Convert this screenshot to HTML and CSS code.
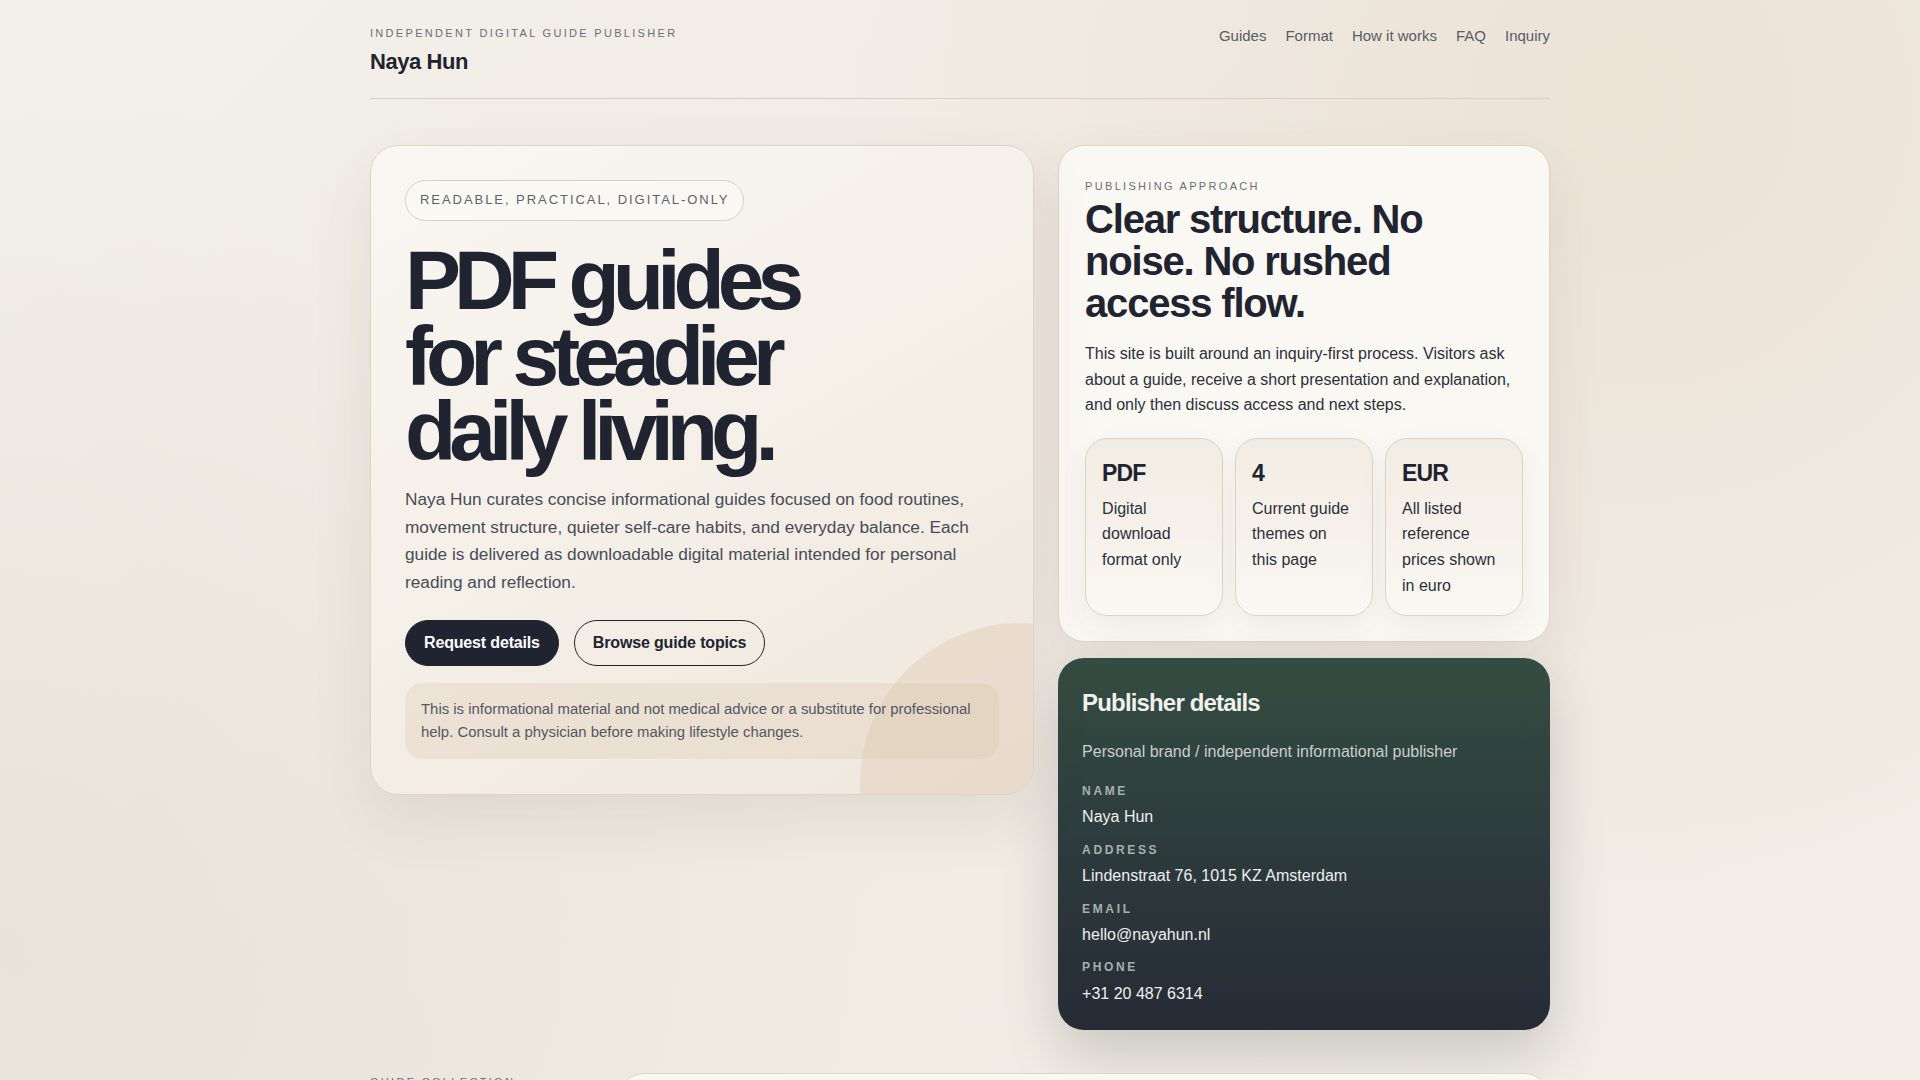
FILE: index.html
```html
<!DOCTYPE html>
<html lang="en">
<head>
<meta charset="utf-8">
<title>Naya Hun — PDF guides</title>
<link rel="stylesheet" href="styles.css">
</head>
<body>
<div class="page">
  <header class="site-header">
    <div class="brand">
      <p class="eyebrow">Independent digital guide publisher</p>
      <p class="brand-name">Naya Hun</p>
    </div>
    <nav class="nav">
      <a href="#guides">Guides</a>
      <a href="#format">Format</a>
      <a href="#how">How it works</a>
      <a href="#faq">FAQ</a>
      <a href="#inquiry">Inquiry</a>
    </nav>
  </header>

  <main class="hero">
    <section class="hero-card">
      <span class="hero-circle"></span>
      <div class="hero-body">
        <span class="pill">Readable, practical, digital-only</span>
        <h1 class="hero-title">PDF guides for steadier daily living.</h1>
        <p class="hero-text">Naya Hun curates concise informational guides focused on food routines, movement structure, quieter self-care habits, and everyday balance. Each guide is delivered as downloadable digital material intended for personal reading and reflection.</p>
        <div class="actions">
          <a class="btn btn-dark" href="#inquiry">Request details</a>
          <a class="btn btn-outline" href="#guides">Browse guide topics</a>
        </div>
        <p class="disclaimer">This is informational material and not medical advice or a substitute for professional help. Consult a physician before making lifestyle changes.</p>
      </div>
    </section>

    <div class="side">
      <section class="approach-card">
        <p class="eyebrow">Publishing approach</p>
        <h2 class="approach-title">Clear structure. No noise. No rushed access flow.</h2>
        <p class="approach-text">This site is built around an inquiry-first process. Visitors ask about a guide, receive a short presentation and explanation, and only then discuss access and next steps.</p>
        <div class="stats">
          <div class="stat">
            <p class="stat-value">PDF</p>
            <p class="stat-label">Digital download format only</p>
          </div>
          <div class="stat">
            <p class="stat-value">4</p>
            <p class="stat-label">Current guide themes on this page</p>
          </div>
          <div class="stat">
            <p class="stat-value">EUR</p>
            <p class="stat-label">All listed reference prices shown in euro</p>
          </div>
        </div>
      </section>

      <section class="publisher-card">
        <h2 class="publisher-title">Publisher details</h2>
        <p class="publisher-sub">Personal brand / independent informational publisher</p>
        <dl class="details">
          <div class="detail">
            <dt>Name</dt>
            <dd>Naya Hun</dd>
          </div>
          <div class="detail">
            <dt>Address</dt>
            <dd>Lindenstraat 76, 1015 KZ Amsterdam</dd>
          </div>
          <div class="detail">
            <dt>Email</dt>
            <dd>hello@nayahun.nl</dd>
          </div>
          <div class="detail">
            <dt>Phone</dt>
            <dd>+31 20 487 6314</dd>
          </div>
        </dl>
      </section>
    </div>
  </main>

  <section class="collection" id="guides">
    <div class="collection-intro">
      <p class="eyebrow">Guide collection</p>
      <h2 class="collection-title">Four calm, practical topics.</h2>
    </div>
    <div class="collection-card">
      <p class="collection-text">Each guide is a short, structured PDF intended for personal reading.</p>
    </div>
  </section>
</div>
</body>
</html>
```

FILE: styles.css
```css
* {
  box-sizing: border-box;
}

html, body {
  margin: 0;
  padding: 0;
}

body {
  font-family: "Liberation Sans", Arial, Helvetica, sans-serif;
  color: #1f2430;
  background:
    radial-gradient(circle at 85% 8%, rgba(232, 220, 204, 0.55), rgba(232, 220, 204, 0) 38%),
    radial-gradient(circle at 0% 70%, rgba(226, 220, 210, 0.6), rgba(226, 220, 210, 0) 40%),
    linear-gradient(135deg, #f3f0ea 0%, #f0ebe3 45%, #f2ede6 100%);
  min-height: 100vh;
}

p, h1, h2, dl, dd, dt {
  margin: 0;
}

a {
  text-decoration: none;
  color: inherit;
}

.page {
  width: 1180px;
  margin: 0 auto;
}

/* Header */
.site-header {
  display: flex;
  justify-content: space-between;
  align-items: flex-start;
  padding: 27px 0 22px;
  border-bottom: 1px solid #d9d0c3;
}

.eyebrow {
  font-size: 11px;
  line-height: 1.2;
  letter-spacing: 0.21em;
  text-transform: uppercase;
  color: #6a6e77;
}

.brand-name {
  margin-top: 9px;
  font-size: 22px;
  line-height: 1.2;
  font-weight: 700;
  letter-spacing: -0.02em;
  color: #1f2430;
}

.nav {
  display: flex;
  gap: 19px;
  font-size: 15px;
  line-height: 18px;
  color: #575c67;
}

/* Hero grid */
.hero {
  display: grid;
  grid-template-columns: 1.35fr 1fr;
  gap: 24px;
  align-items: start;
  margin-top: 46px;
}

.hero-card {
  position: relative;
  overflow: hidden;
  border: 1px solid #ddd4c7;
  border-radius: 28px;
  padding: 34px 34px 35px;
  background: linear-gradient(150deg, #f9f7f2 0%, #f4efe7 50%, #efe7dc 100%);
  box-shadow: 0 24px 60px rgba(90, 70, 45, 0.10);
}

.hero-circle {
  position: absolute;
  width: 320px;
  height: 320px;
  right: -147px;
  bottom: -149px;
  border-radius: 50%;
  background: rgba(214, 188, 162, 0.28);
}

.hero-body {
  position: relative;
}

.pill {
  display: inline-block;
  padding: 11.5px 14px;
  border: 1px solid #d8cfc2;
  border-radius: 999px;
  background: rgba(252, 250, 246, 0.75);
  font-size: 13px;
  line-height: 16px;
  letter-spacing: 0.15em;
  text-transform: uppercase;
  color: #5d626c;
}

.hero-title {
  max-width: 440px;
  margin-top: 22.5px;
  font-size: 84px;
  line-height: 0.9;
  font-weight: 700;
  letter-spacing: -0.083em;
  color: #1f2430;
}

.hero-text {
  margin-top: 16px;
  font-size: 17.25px;
  line-height: 27.8px;
  color: #474c57;
}

.actions {
  display: flex;
  gap: 15px;
  margin-top: 23px;
}

.btn {
  display: inline-block;
  padding: 12px 18px;
  border: 1px solid #1f2430;
  border-radius: 999px;
  font-size: 16px;
  line-height: 20px;
  font-weight: 700;
  letter-spacing: -0.01em;
}

.btn-dark {
  background: #1f2430;
  color: #ffffff;
}

.btn-outline {
  background: transparent;
  color: #1f2430;
}

.disclaimer {
  margin-top: 17px;
  padding: 15px 16px;
  border-radius: 18px;
  background: rgba(214, 190, 164, 0.25);
  font-size: 14.9px;
  line-height: 23px;
  color: #545862;
}

/* Right column */
.side {
  display: flex;
  flex-direction: column;
  gap: 16px;
}

.approach-card {
  border: 1px solid #ddd4c7;
  border-radius: 26px;
  padding: 34.5px 26px 25px;
  background: #faf8f3;
  box-shadow: 0 22px 55px rgba(90, 70, 45, 0.09);
}

.approach-title {
  margin-top: 4.5px;
  font-size: 40px;
  line-height: 42px;
  font-weight: 700;
  letter-spacing: -0.03em;
  color: #1f2430;
}

.approach-text {
  margin-top: 17.5px;
  font-size: 16px;
  line-height: 1.6;
  color: #2b303a;
}

.stats {
  display: grid;
  grid-template-columns: repeat(3, 1fr);
  gap: 12px;
  margin-top: 19.5px;
}

.stat {
  border: 1px solid #ddd4c7;
  border-radius: 22px;
  padding: 22px 16px 16.5px;
  background: linear-gradient(180deg, #f1ece3 0%, #f6f2eb 55%, #faf8f3 100%);
  box-shadow: 0 10px 26px rgba(90, 70, 45, 0.07);
}

.stat-value {
  font-size: 23px;
  line-height: 1.1;
  font-weight: 700;
  letter-spacing: -0.04em;
  color: #1f2430;
}

.stat-label {
  margin-top: 10px;
  font-size: 16px;
  line-height: 1.6;
  color: #2b303a;
}

.publisher-card {
  border-radius: 26px;
  padding: 31px 24px 24.5px;
  background: linear-gradient(180deg, #344d42 0%, #2d3b3c 50%, #262b36 100%);
  box-shadow: 0 24px 55px rgba(30, 35, 40, 0.18);
  color: #eef0ec;
}

.publisher-title {
  font-size: 24px;
  line-height: 1.2;
  font-weight: 700;
  letter-spacing: -0.035em;
  color: #f1f2ee;
}

.publisher-sub {
  margin-top: 22.5px;
  font-size: 16px;
  line-height: 24px;
  color: #c8cecb;
}

.details {
  display: flex;
  flex-direction: column;
  gap: 13.4px;
  margin-top: 20px;
}

.detail dt {
  font-size: 12px;
  line-height: 1.2;
  font-weight: 700;
  letter-spacing: 0.22em;
  text-transform: uppercase;
  color: #a8b0ad;
}

.detail dd {
  margin-top: 7px;
  font-size: 16px;
  line-height: 24px;
  color: #eef0ec;
}

/* Collection section */
.collection {
  display: grid;
  grid-template-columns: 220px 1fr;
  gap: 28px;
  margin-top: 43px;
  padding-bottom: 80px;
}

.collection-intro {
  padding-top: 3px;
}

.collection-title {
  margin-top: 10px;
  font-size: 28px;
  line-height: 1.1;
  font-weight: 700;
  letter-spacing: -0.03em;
}

.collection-card {
  border: 1px solid #ddd4c7;
  border-radius: 26px;
  padding: 28px;
  background: #faf8f3;
  min-height: 200px;
}

.collection-text {
  font-size: 16px;
  line-height: 1.6;
  color: #2b303a;
}
```
